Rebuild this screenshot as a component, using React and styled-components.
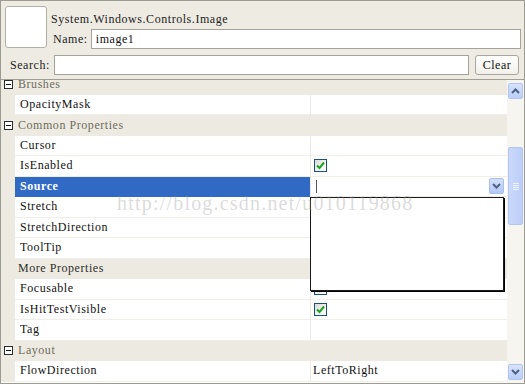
import styled, { createGlobalStyle } from "styled-components";

const GlobalStyle = createGlobalStyle`
    body {
        margin: 0;
        background: #ffffff;
    }
`;

const serif = `"Liberation Serif", "DejaVu Serif", serif`;
const spacing = "0.55px";
const beige = "#EEECE2";
const catBeige = "#EDEBE1";

const rows = [
    { type: "category", label: "Brushes" },
    { type: "prop", label: "OpacityMask" },
    { type: "category", label: "Common Properties" },
    { type: "prop", label: "Cursor" },
    { type: "prop", label: "IsEnabled", check: true },
    { type: "prop", label: "Source", selected: true },
    { type: "prop", label: "Stretch" },
    { type: "prop", label: "StretchDirection" },
    { type: "prop", label: "ToolTip" },
    { type: "sub", label: "More Properties" },
    { type: "prop", label: "Focusable", check: true },
    { type: "prop", label: "IsHitTestVisible", check: true },
    { type: "prop", label: "Tag" },
    { type: "category", label: "Layout" },
    { type: "prop", label: "FlowDirection", value: "LeftToRight" },
];

function Chevron({ up }) {
    return (
        <svg width="9" height="6" viewBox="0 0 9 6">
            <polyline
                points={up ? "1,5 4.5,1.5 8,5" : "1,1 4.5,4.5 8,1"}
                fill="none"
                stroke="#4D6185"
                strokeWidth="2"
            />
        </svg>
    );
}

function Check() {
    return (
        <svg width="9" height="9" viewBox="0 0 9 9">
            <polyline points="1,4.5 3.5,7 8,1.5" fill="none" stroke="#21A121" strokeWidth="2" />
        </svg>
    );
}

export default function App() {
    return (
        <>
            <GlobalStyle />
            <Frame>
                <Header>
                    <TopRow>
                        <Thumb />
                        <Info>
                            <TypeName>System.Windows.Controls.Image</TypeName>
                            <FieldRow>
                                <Label>Name:</Label>
                                <TextBox defaultValue="image1" />
                            </FieldRow>
                        </Info>
                    </TopRow>
                    <SearchRow>
                        <Label>Search:</Label>
                        <TextBox defaultValue="" />
                        <ClearButton>Clear</ClearButton>
                    </SearchRow>
                </Header>
                <GridArea>
                    <ListViewport>
                        <List>
                            {rows.map((r, i) => {
                                if (r.type === "category") {
                                    return (
                                        <CategoryRow key={i}>
                                            <Expander>
                                                <span />
                                            </Expander>
                                            <CategoryText>{r.label}</CategoryText>
                                        </CategoryRow>
                                    );
                                }
                                if (r.type === "sub") {
                                    return (
                                        <SubRow key={i}>
                                            <Gutter />
                                            <SubText>{r.label}</SubText>
                                        </SubRow>
                                    );
                                }
                                return (
                                    <PropRow key={i}>
                                        <Gutter />
                                        <NameCell $selected={r.selected}>{r.label}</NameCell>
                                        <ValueCell>
                                            {r.check && (
                                                <CheckBox>
                                                    <Check />
                                                </CheckBox>
                                            )}
                                            {r.value}
                                            {r.selected && (
                                                <>
                                                    <Caret />
                                                    <DropButton>
                                                        <Chevron />
                                                    </DropButton>
                                                </>
                                            )}
                                        </ValueCell>
                                    </PropRow>
                                );
                            })}
                        </List>
                    </ListViewport>
                    <ScrollBar>
                        <ScrollButton>
                            <Chevron up />
                        </ScrollButton>
                        <ScrollThumb>
                            <Grip />
                        </ScrollThumb>
                        <ScrollButton $bottom>
                            <Chevron />
                        </ScrollButton>
                    </ScrollBar>
                </GridArea>
                <Popup />
                <Watermark>http://blog.csdn.net/u010119868</Watermark>
            </Frame>
        </>
    );
}

const Frame = styled.div`
    position: relative;
    width: 525px;
    height: 384px;
    box-sizing: border-box;
    border: 1px solid #9C9B92;
    background: ${beige};
    overflow: hidden;
    font-family: ${serif};
    font-size: 12px;
    letter-spacing: ${spacing};
    color: #000;
`;

const Header = styled.div`
    padding: 5px 3px 4px 4px;
    border-bottom: 1px solid #A19F93;
`;

const TopRow = styled.div`
    display: flex;
    gap: 4px;
`;

const Thumb = styled.div`
    width: 40px;
    height: 40px;
    background: #fff;
    border: 1px solid #B3B1A6;
    border-radius: 3px;
    flex-shrink: 0;
`;

const Info = styled.div`
    flex: 1;
    display: flex;
    flex-direction: column;
`;

const TypeName = styled.div`
    padding-top: 6px;
    line-height: 14px;
    height: 14px;
    color: #222;
`;

const FieldRow = styled.div`
    display: flex;
    align-items: center;
    gap: 3px;
    margin-top: 3px;
    padding-left: 2px;
`;

const SearchRow = styled.div`
    display: flex;
    align-items: center;
    gap: 4px;
    margin-top: 6px;
    padding-left: 5px;
    padding-right: 2px;
`;

const Label = styled.span`
    line-height: 14px;
    white-space: nowrap;
    color: #222;
`;

const TextBox = styled.input`
    flex: 1;
    height: 20px;
    box-sizing: border-box;
    border: 1px solid #A5A397;
    background: #fff;
    padding: 0 4px;
    font-family: ${serif};
    font-size: 12px;
    letter-spacing: ${spacing};
    color: #111;
    outline: none;
`;

const ClearButton = styled.button`
    width: 44px;
    height: 20px;
    margin-left: 2px;
    box-sizing: border-box;
    border: 1px solid #A8A79F;
    border-radius: 3px;
    background: linear-gradient(#FFFFFF, #F1F0EA);
    font-family: ${serif};
    font-size: 12px;
    letter-spacing: ${spacing};
    padding: 0;
    color: #111;
`;

const GridArea = styled.div`
    display: flex;
    height: 303px;
`;

const ListViewport = styled.div`
    flex: 1;
    overflow: hidden;
    background: #fff;
`;

const List = styled.div`
    margin-top: -6px;
`;

const rowBase = `
    display: flex;
    align-items: stretch;
    height: 20.5px;
    box-sizing: border-box;
`;

const CategoryRow = styled.div`
    ${rowBase}
    align-items: center;
    background: ${catBeige};
    padding-left: 3px;
    gap: 5px;
`;

const Expander = styled.div`
    width: 9px;
    height: 9px;
    box-sizing: border-box;
    border: 1px solid #2B2B2B;
    background: #fff;
    display: flex;
    align-items: center;
    justify-content: center;
    span {
        width: 5px;
        height: 1px;
        background: #111;
    }
`;

const CategoryText = styled.span`
    color: #6E6C60;
`;

const SubRow = styled.div`
    ${rowBase}
    align-items: center;
    background: ${catBeige};
`;

const SubText = styled.span`
    padding-left: 3px;
    color: #2E2E2A;
`;

const PropRow = styled.div`
    ${rowBase}
`;

const Gutter = styled.div`
    width: 14px;
    flex-shrink: 0;
    background: ${catBeige};
`;

const NameCell = styled.div`
    width: 295px;
    flex-shrink: 0;
    box-sizing: border-box;
    display: flex;
    align-items: center;
    padding-left: 5px;
    background: ${p => (p.$selected ? "#316AC5" : "#fff")};
    color: ${p => (p.$selected ? "#fff" : "#111")};
    font-weight: ${p => (p.$selected ? 700 : 400)};
    border-bottom: 1px solid ${p => (p.$selected ? "#316AC5" : "#EFEEE7")};
`;

const ValueCell = styled.div`
    flex: 1;
    display: flex;
    align-items: center;
    box-sizing: border-box;
    padding-left: 2px;
    background: #fff;
    border-left: 1px solid #ECEBE3;
    border-bottom: 1px solid #EFEEE7;
    color: #111;
`;

const CheckBox = styled.div`
    width: 13px;
    height: 13px;
    box-sizing: border-box;
    margin-left: 1px;
    border: 1px solid #1C5180;
    background: linear-gradient(135deg, #DCDCD6, #FFFFFF);
    display: flex;
    align-items: center;
    justify-content: center;
`;

const Caret = styled.span`
    width: 1px;
    height: 13px;
    margin-left: 3px;
    background: #555;
`;

const DropButton = styled.div`
    margin-left: auto;
    margin-right: 3px;
    width: 15px;
    height: 16px;
    box-sizing: border-box;
    border: 1px solid #A9BDEB;
    border-radius: 2px;
    background: linear-gradient(#D3DFFB, #B4C8F5);
    display: flex;
    align-items: center;
    justify-content: center;
`;

const ScrollBar = styled.div`
    width: 17px;
    flex-shrink: 0;
    background: #F6F5EF;
    display: flex;
    flex-direction: column;
    align-items: center;
`;

const ScrollButton = styled.div`
    width: 15px;
    height: 16px;
    box-sizing: border-box;
    margin-top: ${p => (p.$bottom ? "auto" : "3px")};
    margin-bottom: ${p => (p.$bottom ? "3px" : "0")};
    border: 1px solid #B2C5F1;
    border-radius: 2px;
    background: linear-gradient(#D7E3FC, #BACEF8);
    display: flex;
    align-items: center;
    justify-content: center;
`;

const ScrollThumb = styled.div`
    width: 15px;
    height: 78px;
    margin-top: 48px;
    box-sizing: border-box;
    border: 1px solid #B2C5F1;
    border-radius: 2px;
    background: linear-gradient(90deg, #CAD8FB, #BCCEF8);
    display: flex;
    align-items: center;
    justify-content: center;
`;

const Grip = styled.div`
    width: 6px;
    height: 7px;
    background: repeating-linear-gradient(#EEF3FE 0 1px, transparent 1px 2px);
`;

const Popup = styled.div`
    position: absolute;
    left: 309px;
    top: 196px;
    width: 194px;
    height: 94px;
    box-sizing: border-box;
    background: #fff;
    border: 1px solid #1A1A1A;
    box-shadow: 1px 1px 0 #000;
`;

const Watermark = styled.div`
    position: absolute;
    left: 116px;
    top: 191px;
    font-family: ${serif};
    font-size: 20px;
    letter-spacing: 1.2px;
    color: rgba(150, 150, 150, 0.35);
    white-space: nowrap;
    pointer-events: none;
`;
